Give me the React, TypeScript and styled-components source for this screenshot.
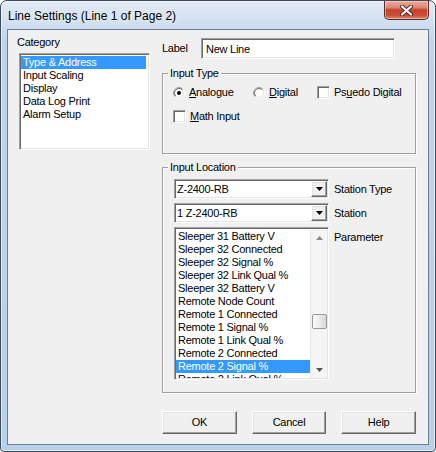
import React from "react";
import styled, { createGlobalStyle } from "styled-components";

const Global = createGlobalStyle`
  html, body { margin: 0; padding: 0; background: #fff; }
  body { width: 436px; height: 452px; overflow: hidden; }
  * { box-sizing: border-box; }
`;

const UI_FONT = `"Liberation Sans", Arial, sans-serif`;

const Window = styled.div`
  width: 436px;
  height: 452px;
  border: 1px solid #3c4a5c;
  border-radius: 7px 7px 4px 4px;
  padding: 0 6px 6px;
  display: flex;
  flex-direction: column;
  background: linear-gradient(180deg, #e2ebf6 0px, #d3e1f1 18px, #c0d5ec 40px, #b9d0ea 100%);
  box-shadow: inset 0 0 0 1px rgba(255, 255, 255, 0.6);
  font-family: ${UI_FONT};
`;

const TitleBar = styled.div`
  height: 28px;
  display: flex;
  align-items: flex-start;
  flex-shrink: 0;
`;

const Title = styled.div`
  margin: 7px 0 0 1px;
  font-family: "Liberation Sans", Arial, sans-serif;
  font-size: 12px;
  line-height: 16px;
  color: #000;
  text-shadow: 0 0 6px rgba(255, 255, 255, 0.9);
`;

const CloseButton = styled.div`
  margin-left: auto;
  width: 45px;
  height: 19px;
  border: 1px solid #5b2a22;
  border-top: none;
  border-radius: 0 0 5px 5px;
  background: linear-gradient(180deg, #e9a99a 0%, #dc8a77 35%, #c3412c 50%, #c9503a 80%, #e08a6f 100%);
  box-shadow: inset 0 0 0 1px rgba(255, 220, 210, 0.55);
  display: flex;
  align-items: center;
  justify-content: center;
`;

const Client = styled.div`
  flex: 1;
  border: 1px solid #6d7e92;
  background: #f0f0f0;
  display: grid;
  grid-template-columns: 134px 254px;
  column-gap: 11px;
  padding-left: 9px;
  align-items: start;
  color: #000;
  font-size: 11px;
  letter-spacing: -0.25px;
`;

const LeftColumn = styled.div`
  padding-top: 6px;
  display: flex;
  flex-direction: column;
`;

const RightColumn = styled.div`
  padding-top: 8px;
  display: flex;
  flex-direction: column;
`;

const Caption = styled.div`
  line-height: 13px;
  white-space: nowrap;
`;

const Sunken = styled.div`
  background: #fff;
  border: 1px solid;
  border-color: #a0a0a0 #fff #fff #a0a0a0;
  box-shadow: inset 1px 1px 0 #696969, inset -1px -1px 0 #e3e3e3;
`;

const CategoryList = styled(Sunken)`
  margin: 4px 0 0 2px;
  width: 131px;
  height: 97px;
  padding: 2px 3px 2px 1px;
  overflow: hidden;
`;

const ListItem = styled.div<{ $selected?: boolean }>`
  height: 13px;
  line-height: 13px;
  padding-left: 2px;
  white-space: nowrap;
  background: ${(p) => (p.$selected ? "#3399ff" : "transparent")};
  color: ${(p) => (p.$selected ? "#fff" : "#000")};
`;

const LabelRow = styled.div`
  display: flex;
  align-items: center;
  height: 21px;
`;

const FieldLabel = styled.div<{ $width?: number }>`
  width: ${(p) => (p.$width ? `${p.$width}px` : "auto")};
  line-height: 13px;
  white-space: nowrap;
  flex-shrink: 0;
`;

const TextBox = styled(Sunken)`
  width: 194px;
  height: 21px;
  padding-left: 4px;
  display: flex;
  align-items: center;
`;

const GroupBox = styled.fieldset<{ $height: number; $padLeft: number; $top: number }>`
  margin: ${(p) => p.$top}px 0 0;
  width: 254px;
  height: ${(p) => p.$height}px;
  min-width: 0;
  padding: 0 0 0 ${(p) => p.$padLeft}px;
  border: 1px solid #a0a0a0;
  box-shadow: 1px 1px 0 #fff, inset 1px 1px 0 #fff;
  display: flex;
  flex-direction: column;
`;

const GroupLegend = styled.legend<{ $shift: number }>`
  margin-left: ${(p) => p.$shift}px;
  padding: 0 2px;
  line-height: 13px;
  background: #f0f0f0;
`;

const OptionRow = styled.div<{ $top: number }>`
  display: flex;
  align-items: center;
  height: 13px;
  margin-top: ${(p) => p.$top}px;
`;

const Option = styled.div<{ $width?: number }>`
  display: flex;
  align-items: center;
  gap: 4px;
  width: ${(p) => (p.$width ? `${p.$width}px` : "auto")};
  white-space: nowrap;
  line-height: 13px;
`;

const CheckBox = styled(Sunken)`
  width: 13px;
  height: 13px;
  flex-shrink: 0;
`;

const ControlRow = styled.div<{ $top: number; $align?: string }>`
  display: flex;
  align-items: ${(p) => p.$align || "center"};
  gap: 5px;
  margin-top: ${(p) => p.$top}px;
`;

const Combo = styled(Sunken)`
  width: 155px;
  height: 20px;
  padding: 1px 1px 1px 2px;
  display: flex;
  align-items: center;
`;

const ComboText = styled.div`
  flex: 1;
  line-height: 13px;
  white-space: nowrap;
`;

const Raised = styled.div`
  background: #f0f0f0;
  border: 1px solid;
  border-color: #fff #696969 #696969 #fff;
  box-shadow: inset -1px -1px 0 #a0a0a0, inset 1px 1px 0 #e3e3e3;
`;

const DropButton = styled(Raised)`
  width: 16px;
  height: 16px;
  display: flex;
  align-items: center;
  justify-content: center;
`;

const ParamList = styled(Sunken)`
  width: 155px;
  height: 153px;
  padding: 1px;
  display: flex;
  overflow: hidden;
`;

const ParamItems = styled.div`
  flex: 1;
  overflow: hidden;
  padding-top: 1px;
`;

const ScrollBar = styled.div`
  width: 17px;
  display: flex;
  flex-direction: column;
  background: #f5f5f5;
  border-left: 1px solid #e6e6e6;
`;

const ScrollArrow = styled.div`
  height: 17px;
  display: flex;
  align-items: center;
  justify-content: center;
  flex-shrink: 0;
`;

const ScrollTrack = styled.div`
  flex: 1;
  display: flex;
  flex-direction: column;
`;

const Thumb = styled.div<{ $offset: number }>`
  margin: ${(p) => p.$offset}px 0 0 1px;
  width: 15px;
  height: 15px;
  border: 1px solid #999;
  border-radius: 2px;
  background: linear-gradient(90deg, #fbfbfb 0%, #ececec 50%, #d6d6d6 100%);
`;

const ButtonRow = styled.div`
  display: flex;
  gap: 15px;
  margin-top: 18px;
`;

const PushButton = styled(Raised)`
  width: 75px;
  height: 23px;
  display: flex;
  align-items: center;
  justify-content: center;
  line-height: 13px;
`;

const Radio = ({ checked }: { checked?: boolean }) => (
  <svg width="12" height="12" viewBox="0 0 12 12" style={{ flexShrink: 0 }}>
    <defs>
      <linearGradient id="ro" x1="0" y1="0" x2="1" y2="1">
        <stop offset="0.45" stopColor="#a0a0a0" />
        <stop offset="0.55" stopColor="#ffffff" />
      </linearGradient>
      <linearGradient id="ri" x1="0" y1="0" x2="1" y2="1">
        <stop offset="0.45" stopColor="#696969" />
        <stop offset="0.55" stopColor="#e3e3e3" />
      </linearGradient>
    </defs>
    <circle cx="6" cy="6" r="5.5" fill="none" stroke="url(#ro)" />
    <circle cx="6" cy="6" r="4.5" fill="#fff" stroke="url(#ri)" />
    {checked && <circle cx="6" cy="6" r="2" fill="#000" />}
  </svg>
);

const DownTriangle = ({ color = "#000" }: { color?: string }) => (
  <svg width="7" height="4" viewBox="0 0 7 4">
    <path d="M0 0h7L3.5 4z" fill={color} />
  </svg>
);

const UpTriangle = ({ color = "#000" }: { color?: string }) => (
  <svg width="7" height="4" viewBox="0 0 7 4">
    <path d="M0 4h7L3.5 0z" fill={color} />
  </svg>
);

const categories = ["Type & Address", "Input Scaling", "Display", "Data Log Print", "Alarm Setup"];

const params = [
  "Sleeper 31 Battery V",
  "Sleeper 32 Connected",
  "Sleeper 32 Signal %",
  "Sleeper 32 Link Qual %",
  "Sleeper 32 Battery V",
  "Remote Node Count",
  "Remote 1 Connected",
  "Remote 1 Signal %",
  "Remote 1 Link Qual %",
  "Remote 2 Connected",
  "Remote 2 Signal %",
  "Remote 2 Link Qual %",
];

export default function App() {
  return (
    <>
      <Global />
      <Window>
        <TitleBar>
          <Title>Line Settings (Line 1 of Page 2)</Title>
          <CloseButton>
            <svg width="13" height="11" viewBox="0 0 13 11">
              <path d="M2 1.5l9 8M11 1.5l-9 8" stroke="#5a2018" strokeWidth="4" strokeLinecap="round" />
              <path d="M2 1.5l9 8M11 1.5l-9 8" stroke="#fff" strokeWidth="2.2" strokeLinecap="round" />
            </svg>
          </CloseButton>
        </TitleBar>
        <Client>
          <LeftColumn>
            <Caption>Category</Caption>
            <CategoryList>
              {categories.map((c, i) => (
                <ListItem key={c} $selected={i === 0}>
                  {c}
                </ListItem>
              ))}
            </CategoryList>
          </LeftColumn>
          <RightColumn>
            <LabelRow>
              <FieldLabel $width={39}>Label</FieldLabel>
              <TextBox>New Line</TextBox>
            </LabelRow>

            <GroupBox $height={87} $padLeft={10} $top={8}>
              <GroupLegend $shift={-5}>Input Type</GroupLegend>
              <OptionRow $top={6}>
                <Option $width={80}>
                  <Radio checked />
                  <span>
                    <u>A</u>nalogue
                  </span>
                </Option>
                <Option $width={64}>
                  <Radio />
                  <span>
                    <u>D</u>igital
                  </span>
                </Option>
                <Option>
                  <CheckBox />
                  <span>
                    Ps<u>u</u>edo Digital
                  </span>
                </Option>
              </OptionRow>
              <OptionRow $top={11}>
                <Option>
                  <CheckBox />
                  <span>
                    <u>M</u>ath Input
                  </span>
                </Option>
              </OptionRow>
            </GroupBox>

            <GroupBox $height={232} $padLeft={11} $top={7}>
              <GroupLegend $shift={-6}>Input Location</GroupLegend>
              <ControlRow $top={5}>
                <Combo>
                  <ComboText>Z-2400-RB</ComboText>
                  <DropButton>
                    <DownTriangle />
                  </DropButton>
                </Combo>
                <FieldLabel>Station Type</FieldLabel>
              </ControlRow>
              <ControlRow $top={4}>
                <Combo>
                  <ComboText>1 Z-2400-RB</ComboText>
                  <DropButton>
                    <DownTriangle />
                  </DropButton>
                </Combo>
                <FieldLabel>Station</FieldLabel>
              </ControlRow>
              <ControlRow $top={4} $align="flex-start">
                <ParamList>
                  <ParamItems>
                    {params.map((p) => (
                      <ListItem key={p} $selected={p === "Remote 2 Signal %"}>
                        {p}
                      </ListItem>
                    ))}
                  </ParamItems>
                  <ScrollBar>
                    <ScrollArrow>
                      <UpTriangle color="#8a8a8a" />
                    </ScrollArrow>
                    <ScrollTrack>
                      <Thumb $offset={68} />
                    </ScrollTrack>
                    <ScrollArrow>
                      <DownTriangle color="#555" />
                    </ScrollArrow>
                  </ScrollBar>
                </ParamList>
                <FieldLabel style={{ marginTop: 4 }}>Parameter</FieldLabel>
              </ControlRow>
            </GroupBox>

            <ButtonRow>
              <PushButton>OK</PushButton>
              <PushButton>Cancel</PushButton>
              <PushButton>Help</PushButton>
            </ButtonRow>
          </RightColumn>
        </Client>
      </Window>
    </>
  );
}
